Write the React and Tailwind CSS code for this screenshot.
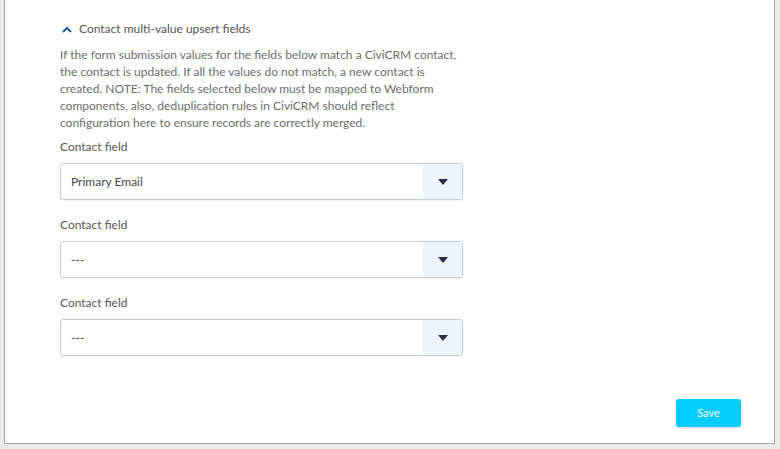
// Contact multi-value upsert settings panel
const fontStack = { fontFamily: 'Lato, "Liberation Sans", sans-serif' };

function SelectField({ value }) {
  return (
    <div className="mb-[17px]">
      <label className="block text-[12px] text-[#555] leading-[16px] mb-[8px]">Contact field</label>
      <div className="flex h-[37px] w-[403px] rounded-[3px] border border-[#c4ccd8] bg-white shadow-[0_1px_1px_rgba(0,0,0,0.05)] overflow-hidden">
        <div className="flex flex-1 items-center pl-[10px] text-[12px] text-[#464646]">{value}</div>
        <div className="flex w-[39px] items-center justify-center bg-[#eef4fd]">
          <svg width="10" height="6" viewBox="0 0 10 6">
            <path d="M0 0 L10 0 L5 6 Z" fill="#2c2c4e" />
          </svg>
        </div>
      </div>
    </div>
  );
}

export default function App() {
  return (
    <div className="h-[449px] w-[780px] bg-[#ececec] pl-[4px] pr-[5px] pb-[5px]" style={fontStack}>
      <div className="flex h-full flex-col border-x border-b border-[#a3a3a3] bg-white pl-[55px] pr-[33px] pt-[20px]">
        {/* Section heading */}
        <div className="flex items-center gap-[7px] pl-[2px] text-[12px] text-[#555] leading-[18px]">
          <svg width="10" height="7" viewBox="0 0 10 7" className="mt-[1px]">
            <path d="M1 6 L5 2 L9 6" stroke="#1f5c9c" strokeWidth="2" fill="none" />
          </svg>
          <span>Contact multi-value upsert fields</span>
        </div>

        <p className="mt-[8px] w-[400px] text-[12px] leading-[17px] text-[#6b6b6b]">
          If the form submission values for the fields below match a CiviCRM contact, the contact is updated. If all the values do not match, a new contact is created. NOTE: The fields selected below must be mapped to Webform components, also, deduplication rules in CiviCRM should reflect configuration here to ensure records are correctly merged.
        </p>

        <div className="mt-[8px]">
          <SelectField value="Primary Email" />
          <SelectField value="---" />
          <SelectField value="---" />
        </div>

        <div className="mt-[26px] flex justify-end">
          <button className="h-[28px] w-[65px] rounded-[3px] bg-[#00ccff] text-[11px] text-white shadow-[0_1px_2px_rgba(0,0,0,0.15)]">
            Save
          </button>
        </div>
      </div>
    </div>
  );
}
